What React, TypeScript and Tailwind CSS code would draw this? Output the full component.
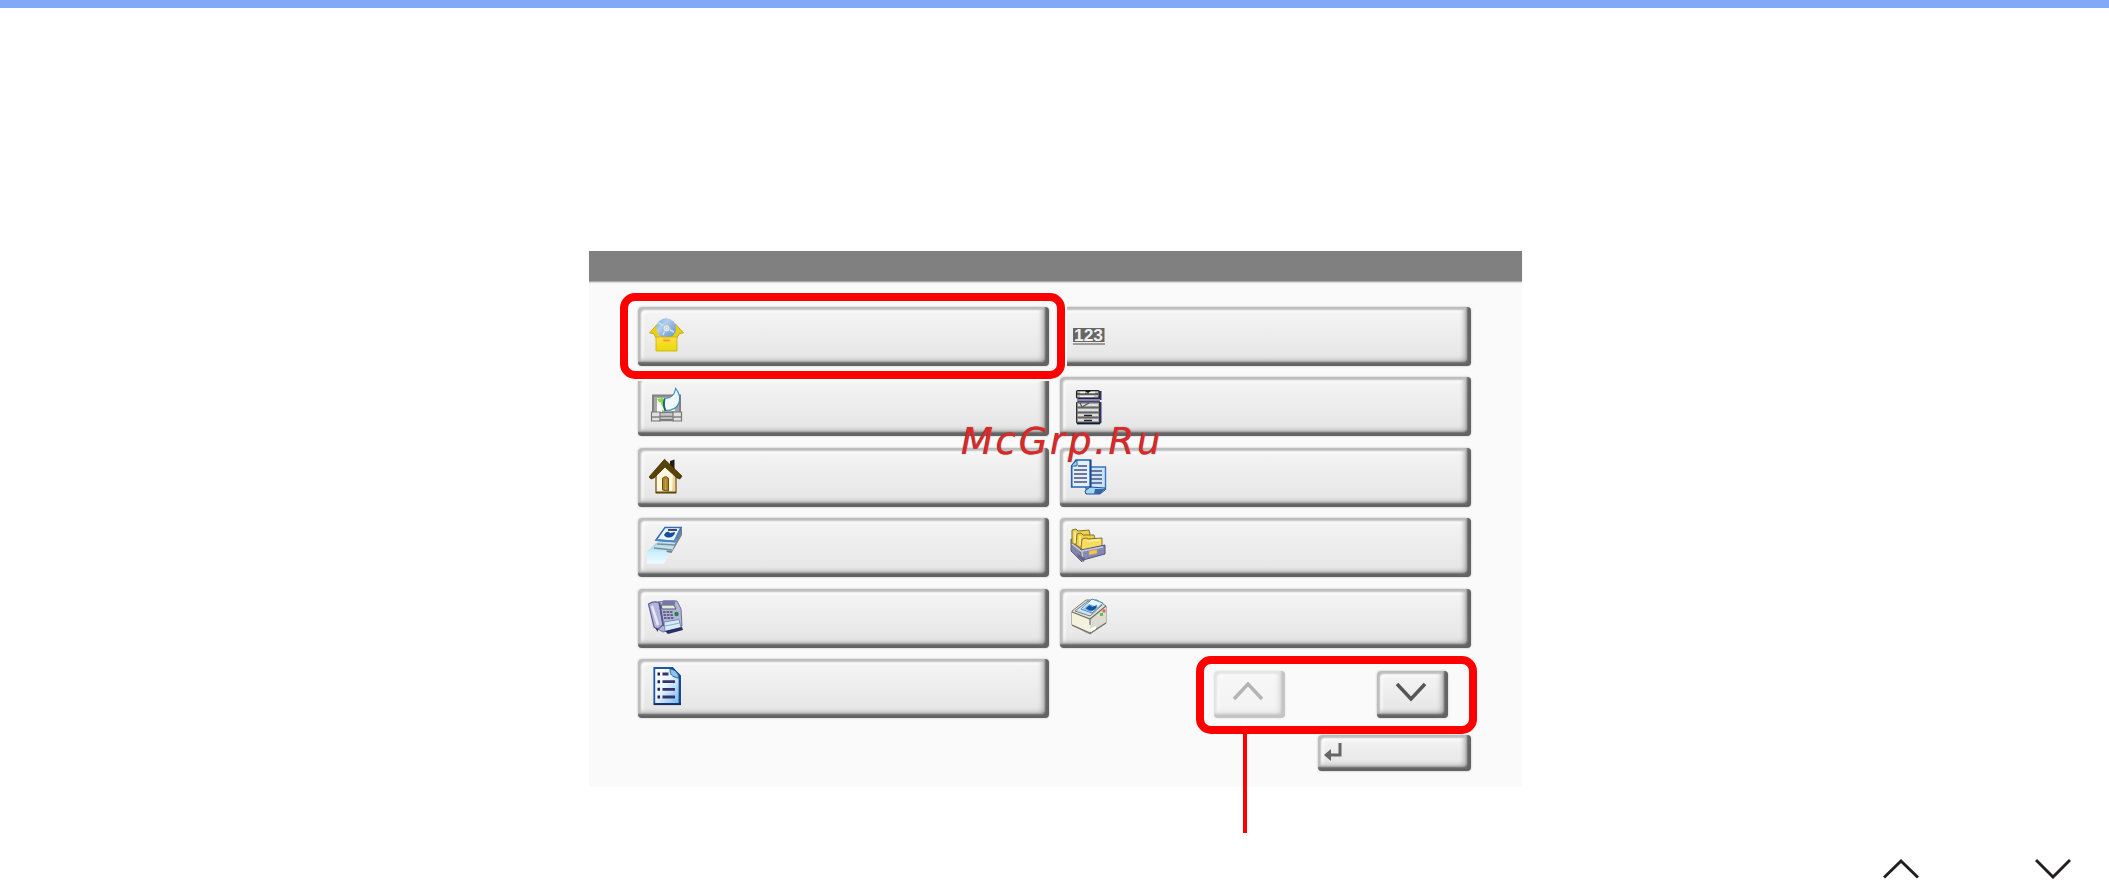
import type { ReactNode } from 'react';
import { clsx } from 'clsx';

function Icon({ children }: { children: ReactNode }) {
  return (
    <svg width="40" height="44" viewBox="0 0 40 44" className="shrink-0">
      {children}
    </svg>
  );
}

const ApplicationIcon = () => (
  <Icon>
    <defs>
      <linearGradient id="box" x2="0" y2="1">
        <stop stopColor="#ffdf4a" />
        <stop offset="1" stopColor="#e8d900" />
      </linearGradient>
      <linearGradient id="disc" x2="1" y2="1">
        <stop stopColor="#6fb2e2" />
        <stop offset=".35" stopColor="#b4d0ec" />
        <stop offset=".6" stopColor="#8fb2da" />
        <stop offset="1" stopColor="#5f9cd2" />
      </linearGradient>
    </defs>
    <path d="M3.500 18l8-9 6 3v10l-7 1.500-3-5zM37.500 18l-8-9-6 3v10l7 1.500 3-5z" fill="#ecd010" stroke="#b99c10" strokeWidth=".8" />
    <circle cx="20.3" cy="13.2" r="10" fill="url(#disc)" />
    <path d="M20 13l-7-5M20 13l8 4M20 13l-3 7" fill="none" stroke="#d3e5f6" strokeWidth="1.400" />
    <circle cx="20.5" cy="13.2" r="3.600" fill="#dfe8f2" stroke="#9fb8d2" strokeWidth=".8" />
    <circle cx="20.5" cy="13.2" r="1.200" fill="#fff" stroke="#8fa9c6" strokeWidth=".5" />
    <path d="M10 22h21v14H10z" fill="url(#box)" stroke="#c9ae10" strokeWidth=".8" />
    <rect x="16.5" y="23.500" width="8" height="3.500" rx="1" fill="#ffbe2e" />
    <path d="M18 25.5h5" stroke="#f49b1c" />
  </Icon>
);

const InternetIcon = () => (
  <Icon>
    <rect x="7" y="10.500" width="27" height="18" fill="#a6a6a6" stroke="#808080" strokeWidth="2" />
    <rect x="11" y="13" width="18" height="13" fill="#eef5ea" />
    <path d="M11 14l6-1 2 12-5-7z" fill="#7edc34" />
    <path d="M11 18l4-1 1 10h-5z" fill="#fff" />
    <path d="M16 25l3 1-3 1z" fill="#7edc34" />
    <path d="M29.700 3.500c4 5 5 10 3 15s-7 7-13 7c-2-4-2-8-1-12 7 0 10-4 11-10z" fill="#f0f8fe" stroke="#348abb" strokeWidth="1.200" />
    <path d="M18.500 14c-1 4-1 8 1 12" fill="none" stroke="#1d5f85" strokeWidth="1.800" />
    <path d="M13 27.500h15v7H13z" fill="#c4c4c4" stroke="#777" />
    <path d="M5.500 27h8.500v9H5.500zM27 27h8.500v9H27z" fill="#e0e0e0" stroke="#777" strokeWidth="1.200" />
    <path d="M6 32h8M27 32h8M14 31.500h13M13 35.500h15" stroke="#808080" strokeWidth="1.500" />
  </Icon>
);

const HomeIcon = () => (
  <Icon>
    <path d="M24 5l4.500-1.500v11l-4.500-4z" fill="#251c13" />
    <path d="M10 17L18.500 7 30 19v17.500H10z" fill="#fff7df" stroke="#806018" strokeWidth="1.400" />
    <path d="M27 18h2v17h-3z" fill="#ead69b" />
    <path d="M18.500 3.300L36 20l-2 3-3-1-12-11L8 22l-3 1-2-2z" fill="#5a4207" stroke="#352604" strokeWidth=".7" />
    <path d="M16.500 34V23c0-3 6-3 6 0v12z" fill="#a8842b" stroke="#705008" />
    <path d="M19.500 23v11" stroke="#c9a447" strokeWidth="1.200" />
    <path d="M10 36.500h20" stroke="#5f4709" strokeWidth="1.800" />
  </Icon>
);

const SendIcon = () => (
  <Icon>
    <defs>
      <linearGradient id="sheet" x2="0" y2="1">
        <stop stopColor="#9fd0e2" />
        <stop offset=".45" stopColor="#cdeefa" />
        <stop offset="1" stopColor="#f0fbff" />
      </linearGradient>
    </defs>
    <path d="M10 17l-9 8.500v12.200h17l6-11.500 2-7z" fill="url(#sheet)" />
    <path d="M36 2v7L25.500 27l-5-1 2-11z" fill="#7d8186" />
    <path d="M12 15l19-2-5 12-18-2z" fill="#c5dde6" />
    <path d="M11 18l18 1M8 22l18 2" stroke="#6e93a4" strokeWidth="1.300" />
    <path d="M19 1.500h16l-6.500 14L10 14z" fill="#eef6ff" stroke="#356cb4" strokeWidth="1.600" />
    <path d="M10 14l18.500 1.500L34 4" fill="none" stroke="#4688ce" strokeWidth="2" />
    <path d="M22 4h9" stroke="#33355d" strokeWidth="1.800" />
    <path d="M18 9c1-3 4-4 5-3l1 1 5-1c0 5-8 8-11 3z" fill="#174f9e" />
  </Icon>
);

const FaxIcon = () => (
  <Icon>
    <path d="M12 5l7-1h12l4 8 1 17-19 6-7-4z" fill="#b4b5d4" stroke="#6f71a2" />
    <path d="M17 3.500h12v4H16z" fill="#7477a7" />
    <path d="M2.500 7q5-3.500 10.500-1.500l4 22.500-5 4-4-2z" fill="#b5b4d8" stroke="#5d5f94" strokeWidth="1.200" />
    <path d="M6 9l6 19" stroke="#e7e6f4" strokeWidth="2.500" />
    <path d="M13.500 6l4 23" stroke="#51538a" strokeWidth="1.600" />
    <path d="M15 8h13l2 4H16z" fill="#e4ead8" stroke="#555776" />
    <path d="M17 15h10M17.500 18h10M18 21h10" stroke="#62648c" strokeWidth="2.200" strokeDasharray="2.600 .8" />
    <circle cx="30.500" cy="17" r="2.200" fill="#218645" />
    <path d="M18 25l15-2.500 2 8-16 4z" fill="#d9ebf6" stroke="#6f93b6" />
    <path d="M19 29l15-3" stroke="#89aeca" />
    <path d="M19 34l17-4 1 3-15 4zM9 31l3 1v3z" fill="#292d68" />
  </Icon>
);

const ReportIcon = () => (
  <Icon>
    <defs>
      <linearGradient id="report" x2="1" y2="1">
        <stop stopColor="#fff" />
        <stop offset=".45" stopColor="#eaf5ff" />
        <stop offset="1" stopColor="#6db7f1" />
      </linearGradient>
    </defs>
    <path d="M8.300 1h18l7.500 8v28H8.300z" fill="url(#report)" stroke="#20589d" strokeWidth="1.800" />
    <path d="M26 1l7.800 8v28" fill="none" stroke="#174886" strokeWidth="2.200" />
    <path d="M24 2c0 5 1 8 9 9-1-5-3-8-9-9z" fill="#8dc4ef" stroke="#2461aa" />
    <path d="M8 37.200h27" stroke="#1c2c60" strokeWidth="1.800" />
    <path d="M11.500 7H14M11.500 14.700H14M11.500 22.300H14M11.500 30H14" stroke="#272159" strokeWidth="3" />
    <path d="M16.500 7h6M16.500 14.700H29M16.500 22.300H29M16.500 30H29" stroke="#38346b" strokeWidth="2.800" />
  </Icon>
);

const CounterIcon = () => (
  <Icon>
    <rect x="5" y="13" width="31.500" height="14" fill="#666" />
    <path d="M5 29h32" stroke="#888" strokeWidth="1.600" />
    <text
      x="20.500"
      y="26"
      textAnchor="middle"
      textLength="29"
      lengthAdjust="spacingAndGlyphs"
      fill="#f0f0f0"
      className="font-['Liberation_Sans',sans-serif] text-[17px] font-bold"
    >
      123
    </text>
  </Icon>
);

const DeviceIcon = () => (
  <Icon>
    <path d="M31 6h2.500v9H31zM31 17h2.500v21L31 39zM10 12h22v5H10z" fill="#30356e" />
    <path d="M9 14h23v2.500H9z" fill="#8587bb" />
    <rect x="8.600" y="5.600" width="22.500" height="7.500" rx="1" fill="#b9bab9" stroke="#222" strokeWidth="1.300" />
    <path d="M9 9h21" stroke="#444" strokeWidth="1.600" />
    <path d="M12 7.500h5M21 7.500h6M12 11.300h14" stroke="#f2f2f2" strokeWidth="1.300" />
    <path d="M17 6h6l-3 2z" fill="#111" />
    <rect x="8.600" y="17" width="23" height="21" rx="1" fill="#a4a4a4" stroke="#333" strokeWidth="1.200" />
    <path d="M10 20h20M10 25h20M10 30h20M10 35h20" stroke="#dedede" strokeWidth="2.200" />
    <path d="M9 22.500h22M9 27.500h22M9 32.500h22" stroke="#666" strokeWidth="1.300" />
    <path d="M12 18l2 4 7-4" fill="none" stroke="#555" strokeWidth="1.200" />
    <path d="M16 30.500h8M16 35.500h8" stroke="#222" strokeWidth="1.300" />
    <path d="M9 38.500h23" stroke="#111536" strokeWidth="1.800" />
  </Icon>
);

const CopyIcon = () => (
  <Icon>
    <path d="M18 11h19.500v22H18z" fill="#c8e5fc" stroke="#3b76ba" strokeWidth="1.400" />
    <path d="M23 15h11M23 19h11M23 23h11M23 27h11" stroke="#4c5080" strokeWidth="1.600" />
    <path d="M17 35l5-4 15 1v2l-5 4H18z" fill="#a6d5ef" stroke="#244f96" />
    <path d="M27 33h10l-5 5h-6z" fill="#3566aa" />
    <path d="M8 4h14.500v27H3.700V10z" fill="#e0f0ff" stroke="#2764a9" strokeWidth="1.700" />
    <path d="M3 10h6V4z" fill="#9cccf0" stroke="#2764a9" />
    <path d="M10 10h9M6 14h13M6 18h13M6 22h13M6 26h13" stroke="#4b4f7b" strokeWidth="1.600" />
    <path d="M22.500 4v27" stroke="#174a8e" strokeWidth="1.800" />
  </Icon>
);

const DocumentBoxIcon = () => (
  <Icon>
    <path d="M3 13l9 6 2 17L3 25z" fill="#8486a8" stroke="#606282" />
    <path d="M4 4l4-1 2 2 11-1 1 4-10 13-8-4z" fill="#ecd051" stroke="#827331" />
    <path d="M9 8l4-1 2 2h11l1 4-13 10-6-4z" fill="#efd244" stroke="#827331" />
    <path d="M14 13l4-1 2 1 14-1v8l-18 5-3-3z" fill="#f8dc5e" stroke="#827331" />
    <path d="M7 6v11M12 10v9M19 15l13-1" stroke="#fff3a8" strokeWidth="1.500" />
    <path d="M13 24l24-5v9l-22 6z" fill="#8588b2" stroke="#54577a" />
    <path d="M4 18l10 8 1 9M14 25l21-4" fill="none" stroke="#c8c9dd" strokeWidth="1.500" />
    <path d="M21 25l8-1.500v4L21 29z" fill="#ffc73e" stroke="#b2a18b" strokeWidth=".7" />
    <path d="M9 28l8 4-1 4-6-5" fill="#626481" />
  </Icon>
);

const PrinterIcon = () => (
  <Icon>
    <path d="M4 14L18 3h11l9 6v17L22 37 4 28z" fill="#e4e1d1" stroke="#7c7e76" />
    <path d="M4 15l18 7v14L4 28z" fill="#f4f1dc" />
    <path d="M22 22L38 9v17L22 36z" fill="#dcdcd0" />
    <path d="M4 15l18 7L38 9M22 22v6M4 28l18 8 16-10" fill="none" stroke="#6a6e69" strokeWidth="1.100" />
    <path d="M7 14L20 4l14 4-12 11z" fill="#cfe1ee" stroke="#79828c" />
    <path d="M13 12L24 2l11 4-11 10z" fill="#e7f5ff" stroke="#4b8bc4" />
    <path d="M15 12l6-5 9 3-7 5z" fill="#7db6e4" />
    <path d="M18 11l4-3 2 2 5-2c-1 7-8 7-11 3z" fill="#12549d" />
    <path d="M32 16h3v3h-3z" fill="#5bc34b" />
    <path d="M34.500 12.500h3v3h-3z" fill="#e26757" />
    <path d="M21 32l7-3v3l-5 3z" fill="#fff" />
  </Icon>
);

const leftMenu = [
  { id: 'application', icon: <ApplicationIcon /> },
  { id: 'internet', icon: <InternetIcon /> },
  { id: 'home', icon: <HomeIcon /> },
  { id: 'send', icon: <SendIcon /> },
  { id: 'fax', icon: <FaxIcon /> },
  { id: 'report', icon: <ReportIcon /> },
];

const rightMenu = [
  { id: 'counter', icon: <CounterIcon /> },
  { id: 'device', icon: <DeviceIcon /> },
  { id: 'copy', icon: <CopyIcon /> },
  { id: 'document-box', icon: <DocumentBoxIcon /> },
  { id: 'printer', icon: <PrinterIcon /> },
];

interface BevelButtonProps {
  className?: string;
  disabled?: boolean;
  children: ReactNode;
}

function BevelButton({ className, disabled, children }: BevelButtonProps) {
  return (
    <button
      disabled={disabled}
      className={clsx(
        'flex shrink-0 rounded-[4px] bg-linear-to-b from-[#f5f5f5] to-[#e4e4e4]',
        'shadow-[inset_-4px_-4px_2px_#636363,inset_3px_3px_2px_#bcbcbc,inset_-7px_-6px_4px_#b4b4b4,inset_5px_5px_3px_#fff,0_0_2px_#b0b0b0]',
        disabled && 'opacity-35',
        className,
      )}
    >
      {children}
    </button>
  );
}

export default function App() {
  return (
    <div className="h-[880px] w-[2109px] overflow-hidden bg-white">
      <div className="h-2 bg-[#80aaf8]" />

      <div className="relative mt-[243px] ml-[589px] h-[536px] w-[933px] bg-[#fafafa]">
        <div className="h-[31px] border-b border-[#a8a8a8] bg-[#808080] shadow-[0_1px_1px_#ddd]" />

        <div className="flex gap-[11px] pt-[25px] pl-[49px]">
          <div className="flex flex-col gap-[11.4px]">
            {leftMenu.map((item) => (
              <BevelButton key={item.id} className="h-[59px] w-[411px] pt-2 pl-2">
                {item.icon}
              </BevelButton>
            ))}
          </div>
          <div className="flex flex-col gap-[11.4px]">
            {rightMenu.map((item) => (
              <BevelButton key={item.id} className="h-[59px] w-[411px] pt-2 pl-2">
                {item.icon}
              </BevelButton>
            ))}
            <div className="flex justify-end gap-[92px] pt-3 pr-[23px]">
              <BevelButton disabled className="h-[47px] w-[71px] justify-center pt-[9px] pr-1">
                <svg width="34" height="22" viewBox="0 0 34 22" fill="none" stroke="#333" strokeWidth="3.500">
                  <path d="M3 19L17 4l14 15" />
                </svg>
              </BevelButton>
              <BevelButton className="h-[47px] w-[71px] justify-center pt-[10px] pr-1">
                <svg width="34" height="22" viewBox="0 0 34 22" fill="none" stroke="#555" strokeWidth="3.500">
                  <path d="M3 3l14 15L31 3" />
                </svg>
              </BevelButton>
            </div>
          </div>
        </div>

        <div className="flex justify-end pt-[17px] pr-[51px]">
          <BevelButton className="h-[36px] w-[153px] pt-[6px] pl-[5px]">
            <svg width="20" height="22" viewBox="0 0 20 22">
              <path d="M17 2v12H7" fill="none" stroke="#666" strokeWidth="3" />
              <path d="M1 14l7-6v12z" fill="#666" />
            </svg>
          </BevelButton>
        </div>

        {/* callouts */}
        <div className="absolute top-[42px] left-[31px] h-[86px] w-[445px] rounded-[15px] border-8 border-[#ff0000] shadow-[0_0_0_2px_#fff,inset_0_0_0_1px_#fff]" />
        <div className="absolute top-[405px] left-[607px] h-[78px] w-[281px] rounded-[15px] border-8 border-[#ff0000]" />
        <div className="absolute top-[482px] left-[654px] h-[100px] w-1 bg-[#ff0000]" />

        <div className="absolute top-[167px] left-[372px] font-['DejaVu_Sans',sans-serif] text-[37px] leading-[48px] tracking-[2.7px] whitespace-nowrap text-[#dc2828] italic [text-shadow:0_0_1px_#555]">
          McGrp.Ru
        </div>
      </div>

      <div className="flex justify-end gap-[116px] pt-[71px] pr-[38px]">
        <svg width="36" height="21" viewBox="0 0 36 21" fill="none" stroke="#231f20" strokeWidth="3">
          <path d="M1 19.500L18 3l17 16.500" />
        </svg>
        <svg width="36" height="21" viewBox="0 0 36 21" fill="none" stroke="#231f20" strokeWidth="3">
          <path d="M1 2L18 19L35 2" />
        </svg>
      </div>
    </div>
  );
}
